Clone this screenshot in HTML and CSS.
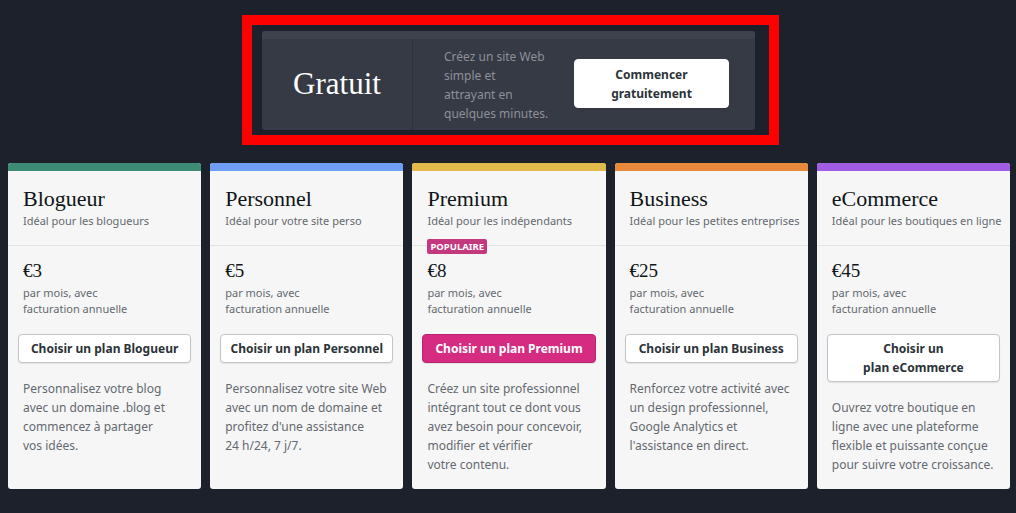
FILE: index.html
```html
<!DOCTYPE html>
<html lang="fr">
<head>
<meta charset="utf-8">
<title>Plans</title>
<link rel="stylesheet" href="styles.css">
</head>
<body>
<div class="frame">
  <div class="free">
    <div class="free-bar"></div>
    <div class="free-body">
      <div class="free-name">Gratuit</div>
      <div class="free-main">
        <p class="free-desc">Créez un site Web simple et attrayant en quelques minutes.</p>
        <a class="btn btn-free" href="#">Commencer gratuitement</a>
      </div>
    </div>
  </div>
</div>

<div class="plans">
  <div class="card">
    <div class="bar bar-green"></div>
    <div class="head">
      <h2 class="name">Blogueur</h2>
      <p class="sub">Idéal pour les blogueurs</p>
    </div>
    <div class="body">
      <p class="price">€3</p>
      <p class="billing">par mois, avec<br>facturation annuelle</p>
      <a class="btn" href="#">Choisir un plan Blogueur</a>
      <p class="desc">Personnalisez votre blog avec un domaine .blog et commencez à partager vos&nbsp;idées.</p>
    </div>
  </div>

  <div class="card">
    <div class="bar bar-blue"></div>
    <div class="head">
      <h2 class="name">Personnel</h2>
      <p class="sub">Idéal pour votre site perso</p>
    </div>
    <div class="body">
      <p class="price">€5</p>
      <p class="billing">par mois, avec<br>facturation annuelle</p>
      <a class="btn" href="#">Choisir un plan Personnel</a>
      <p class="desc">Personnalisez votre site Web avec un nom de domaine et profitez d'une assistance 24&nbsp;h/24, 7&nbsp;j/7.</p>
    </div>
  </div>

  <div class="card">
    <div class="bar bar-yellow"></div>
    <div class="head">
      <h2 class="name">Premium</h2>
      <p class="sub">Idéal pour les indépendants</p>
    </div>
    <span class="badge">POPULAIRE</span>
    <div class="body">
      <p class="price">€8</p>
      <p class="billing">par mois, avec<br>facturation annuelle</p>
      <a class="btn btn-primary" href="#">Choisir un plan Premium</a>
      <p class="desc">Créez un site professionnel intégrant tout ce dont vous avez besoin pour concevoir, modifier et vérifier votre&nbsp;contenu.</p>
    </div>
  </div>

  <div class="card">
    <div class="bar bar-orange"></div>
    <div class="head">
      <h2 class="name">Business</h2>
      <p class="sub">Idéal pour les petites entreprises</p>
    </div>
    <div class="body">
      <p class="price">€25</p>
      <p class="billing">par mois, avec<br>facturation annuelle</p>
      <a class="btn" href="#">Choisir un plan Business</a>
      <p class="desc">Renforcez votre activité avec un design professionnel, Google Analytics et l'assistance en direct.</p>
    </div>
  </div>

  <div class="card">
    <div class="bar bar-purple"></div>
    <div class="head">
      <h2 class="name">eCommerce</h2>
      <p class="sub">Idéal pour les boutiques en ligne</p>
    </div>
    <div class="body">
      <p class="price">€45</p>
      <p class="billing">par mois, avec<br>facturation annuelle</p>
      <a class="btn" href="#">Choisir un plan&nbsp;eCommerce</a>
      <p class="desc">Ouvrez votre boutique en ligne avec une plateforme flexible et puissante conçue pour suivre votre croissance.</p>
    </div>
  </div>
</div>
</body>
</html>
```

FILE: styles.css
```css
* { box-sizing: border-box; }

html, body {
  margin: 0;
  padding: 0;
}

body {
  background: #1c212c;
  font-family: "Noto Sans", "Open Sans", sans-serif;
  width: 1016px;
  height: 513px;
  overflow: hidden;
  padding-top: 15px;
}

p { margin: 0; }
h2 { margin: 0; font-weight: normal; }

/* ---------- Free plan ---------- */
.frame {
  width: 537px;
  height: 130px;
  margin-left: 242px;
  border: 10px solid #ff0000;
  padding: 6px 14px 5px 10px;
}

.free {
  height: 99px;
  border-radius: 3px;
  overflow: hidden;
  background: #363a45;
  display: flex;
  flex-direction: column;
}

.free-bar {
  height: 8px;
  background: #3e424d;
}

.free-body {
  flex: 1;
  display: flex;
}

.free-name {
  width: 151px;
  border-right: 1px solid #2d313b;
  display: flex;
  align-items: center;
  justify-content: center;
  font-family: "Liberation Serif", "DejaVu Serif", serif;
  font-size: 31px;
  color: #ffffff;
  padding-bottom: 1px;
}

.free-main {
  flex: 1;
  display: flex;
  align-items: center;
  padding-left: 31px;
  gap: 24px;
}

.free-desc {
  width: 106px;
  font-size: 12px;
  line-height: 19px;
  color: #8d9099;
}

.btn {
  display: block;
  text-decoration: none;
  background: #ffffff;
  border: 1px solid #c3c4c7;
  border-radius: 4px;
  box-shadow: 0 1px 1px rgba(0,0,0,0.08);
  color: #2c3338;
  font-weight: 700;
  font-size: 12px;
  line-height: 19px;
  text-align: center;
  padding: 4px 6px;
}

.btn-free {
  width: 155px;
  height: 49px;
  padding: 5px 10px;
  border-color: #ffffff;
  margin-bottom: 3px;
}

/* ---------- Plans ---------- */
.plans {
  display: flex;
  gap: 9px;
  padding: 0 6px 0 8px;
  margin-top: 18px;
}

.card {
  position: relative;
  flex: 1;
  height: 326px;
  background: #f6f6f6;
  border-radius: 3px;
  overflow: hidden;
}

.bar { height: 8px; }
.bar-green { background: #3d8a75; }
.bar-blue { background: #6f9ef5; }
.bar-yellow { background: #e1ba4b; }
.bar-orange { background: #e6893c; }
.bar-purple { background: #a15ce4; }

.head {
  padding: 14px 4px 16px 15px;
  border-bottom: 1px solid #e3e3e3;
}

.name {
  font-family: "Liberation Serif", "DejaVu Serif", serif;
  font-size: 22px;
  line-height: 28px;
  color: #101517;
}

.sub {
  font-size: 11px;
  line-height: 16px;
  color: #646970;
  white-space: nowrap;
}

.badge {
  position: absolute;
  left: 15px;
  top: 76px;
  height: 15px;
  padding: 0 3px;
  background: #c4387e;
  border-radius: 2px;
  color: #ffffff;
  font-size: 9.5px;
  font-weight: 700;
  line-height: 15px;
  letter-spacing: 0;
}

.body {
  padding: 13px 10px 0 10px;
}

.price {
  font-family: "Liberation Serif", "DejaVu Serif", serif;
  font-size: 19px;
  line-height: 24px;
  color: #101517;
  padding-left: 5px;
  margin-bottom: 2px;
}

.billing {
  font-size: 11px;
  line-height: 16px;
  color: #646970;
  padding-left: 5px;
  margin-bottom: 17px;
}

.btn-primary {
  background: #d52c82;
  border-color: #b8246f;
  color: #ffffff;
}

.desc {
  margin-top: 16px;
  padding: 0 5px;
  font-size: 12px;
  line-height: 19px;
  color: #646970;
}
```
